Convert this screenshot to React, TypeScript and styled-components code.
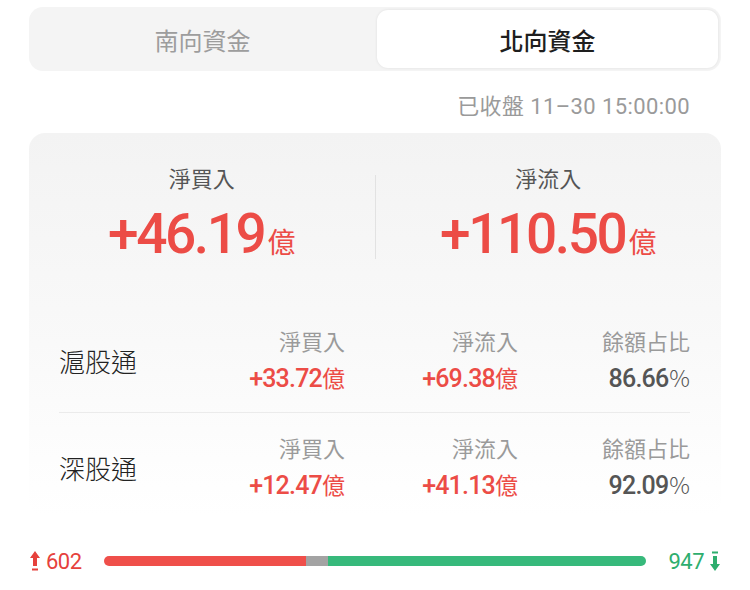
import React from "react";
import styled, { createGlobalStyle } from "styled-components";

const RED = "#ec4c46";
const GREEN = "#2eae6e";

const Global = createGlobalStyle`
  html, body { margin: 0; padding: 0; background: #fff; }
  body { font-family: "Noto Sans CJK TC", "Noto Sans", sans-serif; -webkit-font-smoothing: antialiased; }
`;

const Page = styled.div`
  width: 750px;
  box-sizing: border-box;
  padding: 7px 29px 0;
`;

const Tabs = styled.div`
  display: grid;
  grid-template-columns: 1fr 1fr;
  gap: 4px;
  padding: 3px;
  height: 64px;
  box-sizing: border-box;
  background: #f4f4f4;
  border-radius: 14px;
`;

const Tab = styled.div<{ $active?: boolean }>`
  display: flex;
  align-items: center;
  justify-content: center;
  border-radius: 11px;
  font-size: 24px;
  color: ${(p) => (p.$active ? "#1e1e1e" : "#9d9d9d")};
  font-weight: ${(p) => (p.$active ? 500 : 400)};
  background: ${(p) => (p.$active ? "#fff" : "transparent")};
  box-shadow: ${(p) => (p.$active ? "0 0 3px rgba(0,0,0,0.09)" : "none")};
`;

const Stamp = styled.div`
  margin-top: 22px;
  padding-right: 31px;
  text-align: right;
  font-family: Roboto, "Noto Sans CJK TC", sans-serif;
  font-size: 22px;
  letter-spacing: 0.4px;
  line-height: 28px;
  color: #9a9a9a;
`;

const Card = styled.div`
  margin-top: 12px;
  border-radius: 16px;
  background: linear-gradient(180deg, #f3f3f3 0%, #f9f9f9 55%, #ffffff 100%);
`;

const Summary = styled.div`
  display: grid;
  grid-template-columns: 1fr 1px 1fr;
  align-items: center;
  padding-top: 30px;
`;

const SumCol = styled.div`
  display: flex;
  flex-direction: column;
  align-items: center;
`;

const VDivider = styled.div`
  width: 1px;
  height: 84px;
  margin-top: 6px;
  background: #e2e2e2;
`;

const SumLabel = styled.div`
  font-size: 22px;
  line-height: 28px;
  color: #555;
`;

const SumValue = styled.div`
  margin-top: 13px;
  line-height: 60px;
  height: 60px;
  font-family: Roboto, "Noto Sans", sans-serif;
  font-weight: 500;
  font-size: 55px;
  letter-spacing: -2.4px;
  color: ${RED};
  white-space: nowrap;
`;

const Unit = styled.span<{ $size: number; $gap: number }>`
  font-family: "Noto Sans CJK TC", sans-serif;
  font-weight: 400;
  font-size: ${(p) => p.$size}px;
  line-height: 1;
  letter-spacing: 0;
  margin-left: ${(p) => p.$gap}px;
`;

const Rows = styled.div`
  margin-top: 42px;
  padding: 0 31px 0 30px;
`;

const Row = styled.div<{ $last?: boolean }>`
  display: grid;
  grid-template-columns: 1fr 173px 173px 172px;
  align-items: center;
  padding: 19px 0 ${(p) => (p.$last ? 13 : 16)}px;
  border-bottom: ${(p) => (p.$last ? "none" : "1px solid #ebebeb")};
`;

const RowLabel = styled.div`
  font-size: 26px;
  font-weight: 300;
  color: #222;
`;

const Stat = styled.div`
  display: flex;
  flex-direction: column;
  align-items: flex-end;
`;

const StatLabel = styled.div`
  font-size: 22px;
  line-height: 30px;
  color: #9a9a9a;
`;

const StatValue = styled.div<{ $tone: "red" | "gray" }>`
  margin-top: 7px;
  line-height: 34px;
  height: 34px;
  font-family: Roboto, "Noto Sans", sans-serif;
  font-weight: 500;
  font-size: 25px;
  letter-spacing: -0.8px;
  color: ${(p) => (p.$tone === "red" ? RED : "#555")};
  white-space: nowrap;
`;

const Pct = styled.span`
  font-family: "Noto Sans CJK TC", sans-serif;
  font-weight: 300;
  font-size: 23px;
  line-height: 1;
  letter-spacing: 0;
  margin-left: 1px;
`;

const Breadth = styled.div`
  display: flex;
  align-items: center;
  height: 24px;
  margin-top: 33px;
  padding: 0 1px 0 1px;
`;

const Count = styled.div<{ $up?: boolean }>`
  display: flex;
  align-items: center;
  gap: 6px;
  font-family: Roboto, "Noto Sans", sans-serif;
  font-size: 22px;
  letter-spacing: -0.5px;
  color: ${(p) => (p.$up ? "#e6413c" : GREEN)};
`;

const Bar = styled.div`
  flex: 1;
  display: flex;
  height: 10px;
  margin: 0 22px;
  border-radius: 5px;
  overflow: hidden;
`;

const Seg = styled.div<{ $grow: number; $color: string }>`
  flex: ${(p) => p.$grow} 1 0;
  background: ${(p) => p.$color};
`;

const UpArrow = () => (
  <svg width="10" height="22" viewBox="0 0 10 22" fill="#e6413c">
    <path d="M5 1 L10 8 H7 V16 H3 V8 H0 Z" />
    <rect x="2" y="18.5" width="6" height="2" />
  </svg>
);

const DownArrow = () => (
  <svg width="10" height="22" viewBox="0 0 10 22" fill={GREEN}>
    <rect x="2" y="1.5" width="6" height="2" />
    <path d="M3 6 H7 V14 H10 L5 21 L0 14 H3 Z" />
  </svg>
);

type StatItem = { label: string; value: string; unit?: string; pct?: boolean };

const rows: { name: string; stats: StatItem[] }[] = [
  {
    name: "滬股通",
    stats: [
      { label: "淨買入", value: "+33.72", unit: "億" },
      { label: "淨流入", value: "+69.38", unit: "億" },
      { label: "餘額占比", value: "86.66", pct: true },
    ],
  },
  {
    name: "深股通",
    stats: [
      { label: "淨買入", value: "+12.47", unit: "億" },
      { label: "淨流入", value: "+41.13", unit: "億" },
      { label: "餘額占比", value: "92.09", pct: true },
    ],
  },
];

const breadth = { up: 602, flat: 65, down: 947 };

export default function App() {
  return (
    <>
      <Global />
      <Page>
        <Tabs>
          <Tab>南向資金</Tab>
          <Tab $active>北向資金</Tab>
        </Tabs>
        <Stamp>已收盤 11–30 15:00:00</Stamp>
        <Card>
          <Summary>
            <SumCol>
              <SumLabel>淨買入</SumLabel>
              <SumValue>
                +46.19<Unit $size={28} $gap={3}>億</Unit>
              </SumValue>
            </SumCol>
            <VDivider />
            <SumCol>
              <SumLabel>淨流入</SumLabel>
              <SumValue>
                +110.50<Unit $size={28} $gap={3}>億</Unit>
              </SumValue>
            </SumCol>
          </Summary>
          <Rows>
            {rows.map((r, i) => (
              <Row key={r.name} $last={i === rows.length - 1}>
                <RowLabel>{r.name}</RowLabel>
                {r.stats.map((s) => (
                  <Stat key={s.label}>
                    <StatLabel>{s.label}</StatLabel>
                    <StatValue $tone={s.pct ? "gray" : "red"}>
                      {s.value}
                      {s.unit && (
                        <Unit $size={23} $gap={0}>
                          {s.unit}
                        </Unit>
                      )}
                      {s.pct && <Pct>%</Pct>}
                    </StatValue>
                  </Stat>
                ))}
              </Row>
            ))}
          </Rows>
        </Card>
        <Breadth>
          <Count $up>
            <UpArrow />
            {breadth.up}
          </Count>
          <Bar>
            <Seg $grow={breadth.up} $color="#ef4f4a" />
            <Seg $grow={breadth.flat} $color="#a3a3a3" />
            <Seg $grow={breadth.down} $color="#37b97b" />
          </Bar>
          <Count>
            {breadth.down}
            <DownArrow />
          </Count>
        </Breadth>
      </Page>
    </>
  );
}
